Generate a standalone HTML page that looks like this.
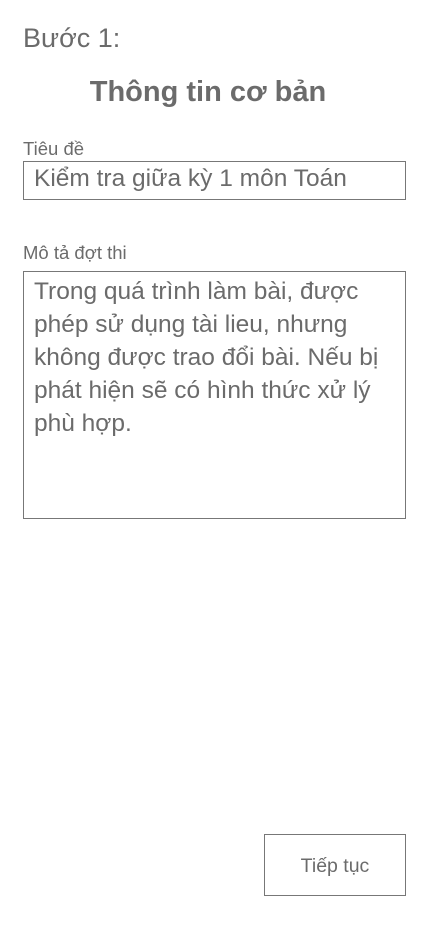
<!DOCTYPE html>
<html><head><meta charset="utf-8"><style>
body{margin:0;width:428px;height:926px;background:#fff;font-family:"Liberation Sans","DejaVu Sans",sans-serif;color:#6b6b6b;position:relative;overflow:hidden}
div{position:absolute;white-space:nowrap}
.box{border:1px solid #777;box-sizing:border-box}
</style></head><body>
<div style="left:23px;top:20px;font-size:27px;line-height:36px">Bước 1:</div>
<div style="left:0;width:416px;text-align:center;top:74px;font-size:29px;font-weight:bold;line-height:36px">Thông tin cơ bản</div>
<div style="left:23px;top:138px;font-size:18.5px;line-height:22px">Tiêu đề</div>
<div class="box" style="left:23px;top:161px;width:383px;height:39px"></div>
<div style="left:34px;top:164px;font-size:24.5px;line-height:30px">Kiểm tra giữa kỳ 1 môn Toán</div>
<div style="left:23px;top:242px;font-size:18.5px;line-height:22px">Mô tả đợt thi</div>
<div class="box" style="left:23px;top:271px;width:383px;height:248px"></div>
<div style="left:34px;top:275px;font-size:24.5px;line-height:33px;white-space:normal;width:368px">Trong quá trình làm bài, được<br>phép sử dụng tài lieu, nhưng<br>không được trao đổi bài. Nếu bị<br>phát hiện sẽ có hình thức xử lý<br>phù hợp.</div>
<div class="box" style="left:264px;top:834px;width:142px;height:62px"></div>
<div style="left:264px;width:142px;text-align:center;top:854px;font-size:19.5px;line-height:24px">Tiếp tục</div>
</body></html>
